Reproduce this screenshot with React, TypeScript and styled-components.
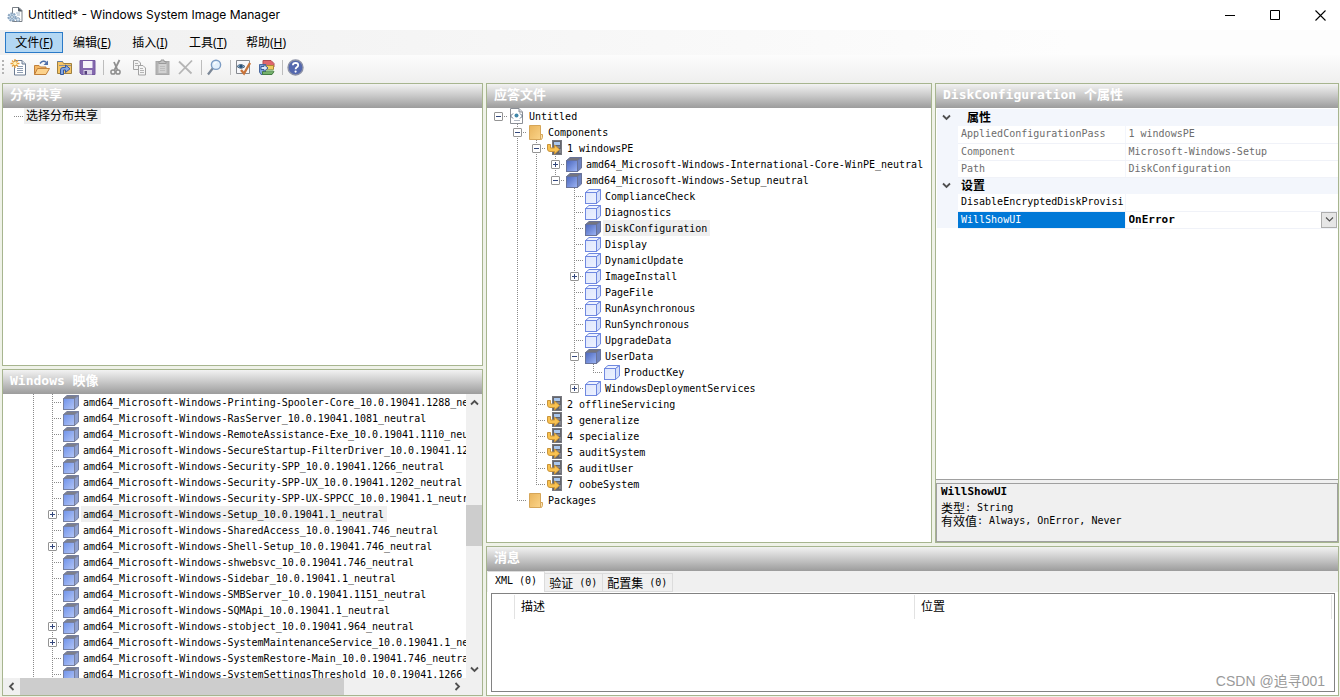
import React from "react";
import styled, { createGlobalStyle, css } from "styled-components";

const MONO = `"DejaVu Sans Mono", "Liberation Mono", "Noto Sans CJK SC", monospace`;
const CJK = `"Noto Sans CJK SC", sans-serif`;
const UI = `"Noto Sans", "Noto Sans CJK SC", sans-serif`;
const DOTS = "#8a8a8a";

const GlobalStyle = createGlobalStyle`
  *, *::before, *::after { box-sizing: border-box; }
  body { margin: 0; background: #eff2e8; color: #000; }
  button, select { font: inherit; color: inherit; margin: 0; padding: 0; border: 0; background: none; }
  svg { display: block; flex: none; }
`;

const Window = styled.div`
  display: flex;
  flex-direction: column;
  height: 100vh;
  min-height: 600px;
  overflow: hidden;
  font-family: ${MONO};
  font-size: 10px;
  line-height: 16px;
`;

/* ---------- title bar ---------- */

const TitleBar = styled.header`
  display: flex;
  align-items: center;
  flex: none;
  height: 30px;
  padding-left: 7px;
  gap: 5px;
  background: #fff;
`;

const Title = styled.h1`
  flex: 1;
  margin: 0;
  font-family: Inter, ${UI};
  font-size: 12px;
  font-weight: 400;
  white-space: nowrap;
`;

const WindowControls = styled.div`
  display: flex;
  gap: 5px;
`;

const WindowButton = styled.button`
  display: grid;
  place-items: center;
  width: 40px;
  height: 28px;
`;

/* ---------- menu and tool bars ---------- */

const MenuBar = styled.nav`
  display: flex;
  align-items: center;
  flex: none;
  height: 25px;
  padding-left: 5px;
  background: linear-gradient(90deg, #f0f0f0, #fdfdfd 80%);
  font-family: ${UI};
  font-size: 12px;
`;

const MenuButton = styled.button<{ $open?: boolean }>`
  display: flex;
  align-items: center;
  justify-content: center;
  width: 58px;
  height: 21px;
  border: 1px solid transparent;
  white-space: nowrap;
  ${(p) => p.$open && css`
    background: #b3d7f3;
    border-color: #2a7ac8;
  `}
`;

const ToolBar = styled.div`
  display: flex;
  align-items: center;
  flex: none;
  height: 28px;
  padding: 0 0 4px 2px;
  background: linear-gradient(#fcfcfc, #efefee);
`;

const Grip = styled.span`
  width: 2px;
  height: 14px;
  margin-right: 3px;
  background: repeating-linear-gradient(#b4b4b4 0 2px, transparent 2px 4px);
`;

const ToolButton = styled.button`
  display: grid;
  place-items: center;
  width: 23px;
  height: 22px;
`;

const ToolSeparator = styled.span`
  width: 1px;
  height: 15px;
  margin: 0 1px 0 4px;
  background: #bdbdbd;
`;

/* ---------- panes ---------- */

const Workspace = styled.main`
  flex: 1;
  min-height: 0;
  display: grid;
  grid-template-columns: minmax(0, 481fr) minmax(0, 853fr);
  gap: 3px;
  padding: 0 1px 1px 2px;
`;

const LeftColumn = styled.div`
  display: grid;
  grid-template-rows: minmax(0, 283fr) minmax(0, 327fr);
  gap: 3px;
  min-height: 0;
`;

const RightColumn = styled.div`
  display: grid;
  grid-template-rows: minmax(0, 460fr) minmax(0, 150fr);
  gap: 3px;
  min-height: 0;
`;

const UpperRow = styled.div`
  display: grid;
  grid-template-columns: minmax(0, 446fr) minmax(0, 404fr);
  gap: 3px;
  min-height: 0;
`;

const Pane = styled.section`
  display: flex;
  flex-direction: column;
  min-width: 0;
  min-height: 0;
  border: 1px solid #a7b58f;
  background: #fff;
  overflow: hidden;
`;

const PaneTitle = styled.h2`
  flex: none;
  height: 24px;
  margin: 0;
  padding: 0 7px;
  background: linear-gradient(#f2f2f2, #c8c8c8 50%, #9c9c9c);
  color: #fff;
  font-size: 13px;
  font-weight: 700;
  line-height: 22px;
  white-space: nowrap;
`;

const Zh = styled.span`
  font-family: ${CJK};
  font-size: 12px;
`;

/* ---------- tree ---------- */

const Tree = styled.div`
  flex: 1;
  min-width: 0;
  min-height: 0;
  padding-left: 2px;
  overflow: hidden;
`;

const TreeRow = styled.div`
  display: flex;
  align-items: center;
  height: 16px;
  white-space: nowrap;
`;

type GuideKind = "none" | "line" | "tee" | "end" | "stub";

const vertical = `repeating-linear-gradient(${DOTS} 0 1px, transparent 1px 2px)`;
const horizontal = `repeating-linear-gradient(90deg, ${DOTS} 0 1px, transparent 1px 2px)`;

const guideStyles = {
  none: css``,
  line: css`background: ${vertical} 9px 0 / 1px 16px no-repeat;`,
  tee: css`background: ${vertical} 9px 0 / 1px 16px no-repeat, ${horizontal} 9px 8px / 10px 1px no-repeat;`,
  end: css`background: ${vertical} 9px 0 / 1px 8px no-repeat, ${horizontal} 9px 8px / 10px 1px no-repeat;`,
  stub: css`background: ${horizontal} 9px 8px / 10px 1px no-repeat;`,
};

const Guide = styled.span<{ $kind: GuideKind }>`
  display: flex;
  align-items: center;
  justify-content: center;
  flex: none;
  width: 19px;
  height: 16px;
  ${(p) => guideStyles[p.$kind]}
`;

const Toggle = styled.button`
  width: 9px;
  height: 9px;
  border: 1px solid #949494;
  border-radius: 1px;
  background: #fff;
  svg { width: 7px; height: 7px; }
`;

const TreeLabel = styled.span<{ $selected?: boolean }>`
  height: 16px;
  padding: 0 3px 0 2px;
  margin-left: 2px;
  line-height: 17px;
  background: ${(p) => (p.$selected ? "#efefef" : "transparent")};
`;

const PlainLabel = styled(TreeLabel)`
  margin-left: 0;
  line-height: 14px;
`;

const IconSlot = styled.span`
  flex: none;
  width: 17px;
  height: 16px;
`;

/* ---------- scroll bars ---------- */

const ScrollArea = styled.div`
  flex: 1;
  min-height: 0;
  display: grid;
  grid-template: minmax(0, 1fr) 17px / minmax(0, 1fr) 16px;
  background: #f0f0f0;
  ${Tree} { background: #fff; }
`;

const ScrollBar = styled.div<{ $axis: "x" | "y" }>`
  display: flex;
  flex-direction: ${(p) => (p.$axis === "y" ? "column" : "row")};
  background: #f0f0f0;
  min-width: 0;
  min-height: 0;
`;

const ScrollArrow = styled.button`
  display: grid;
  place-items: center;
  flex: 0 0 17px;
`;

const ScrollTrack = styled.span<{ $share: number; $thumb?: boolean }>`
  flex: ${(p) => p.$share} 0 0;
  background: ${(p) => (p.$thumb ? "#cdcdcd" : "transparent")};
`;

/* ---------- property grid ---------- */

const PropertyArea = styled.div`
  flex: 1;
  min-height: 0;
  margin-bottom: 3px;
  padding: 1px 0 0 1px;
  border-bottom: 1px solid #a0a0a0;
`;

const PropertyPane = styled(Pane)`
  background: #f0f0f0;
  ${PropertyArea} { background: #fff; }
`;

const PropertyTable = styled.table`
  width: 100%;
  table-layout: fixed;
  border-collapse: collapse;
  td, th {
    height: 17px;
    padding: 0 0 0 3px;
    overflow: hidden;
    font-weight: 400;
    line-height: 14px;
    text-align: left;
    white-space: nowrap;
  }
`;

const GutterCell = styled.td`
  background: #f3f6fc;
  && { padding-left: 2px; }
  button { display: grid; place-items: center; width: 14px; height: 16px; }
`;

const CategoryCell = styled.th<{ $indent?: boolean }>`
  && { padding-left: ${(p) => (p.$indent ? 9 : 3)}px; font-weight: 700; }
  background: #f3f6fc;
`;

const NameCell = styled.th<{ $muted?: boolean; $active?: boolean }>`
  color: ${(p) => (p.$active ? "#fff" : p.$muted ? "#6d6d6d" : "#000")};
  background: ${(p) => (p.$active ? "#0078d7" : "#fff")};
  border-right: 1px solid #f3f6fc;
  border-bottom: 1px solid #f0f2f8;
`;

const ValueCell = styled.td<{ $muted?: boolean }>`
  color: ${(p) => (p.$muted ? "#6d6d6d" : "#000")};
  border-bottom: 1px solid #f0f2f8;
`;

const SelectBox = styled.label`
  display: flex;
  height: 16px;
  select {
    flex: 1;
    min-width: 0;
    appearance: none;
    font-size: 11px;
    font-weight: 700;
  }
`;

const DropArrow = styled.span`
  display: grid;
  place-items: center;
  flex: 0 0 16px;
  margin-right: 1px;
  border: 1px solid #adadad;
  background: #e6e6e6;
`;

const HelpBox = styled.div`
  flex: 0 0 59px;
  padding: 1px 4px;
  border: 1px solid #a0a0a0;
`;

const HelpTitle = styled.h3`
  margin: 0 0 2px;
  font-size: 11px;
  font-weight: 700;
  line-height: 14px;
`;

const HelpLine = styled.p`
  display: flex;
  align-items: center;
  height: 13px;
  margin: 0;
  line-height: 13px;
  white-space: pre;
`;

/* ---------- messages ---------- */

const TabStrip = styled.div`
  display: flex;
  align-items: flex-end;
  flex: none;
  height: 21px;
  padding-left: 1px;
  background: #f0f0f0;
`;

const Tab = styled.button<{ $active?: boolean }>`
  display: flex;
  align-items: center;
  height: ${(p) => (p.$active ? 21 : 19)}px;
  padding: ${(p) => (p.$active ? "0 7px 3px 7px" : "0 5px 0 4px")};
  border: solid #dcdcdc;
  border-width: ${(p) => (p.$active ? "1px 1px 0 0" : "1px 1px 1px 0")};
  background: ${(p) => (p.$active ? "#fff" : "#f0f0f0")};
  line-height: 17px;
  white-space: pre;
`;

const TabPage = styled.div`
  flex: 1;
  min-height: 0;
  display: flex;
  padding: 1px 3px 3px 4px;
`;

const ListFrame = styled.div`
  flex: 1;
  min-width: 0;
  padding: 1px 2px 0 0;
  border: 1px solid #828282;
`;

const MessageTable = styled.table`
  width: 100%;
  table-layout: fixed;
  border-collapse: separate;
  border-spacing: 0;
  th {
    height: 24px;
    padding: 0 0 0 6px;
    border-right: 1px solid #e2e2e2;
    font-weight: 400;
    text-align: left;
  }
`;

const Watermark = styled.div`
  position: absolute;
  right: 15px;
  bottom: 6px;
  color: #9a9a9a;
  font-family: "Liberation Sans", ${CJK};
  font-size: 14px;
  line-height: 20px;
`;

/* ---------- icons ---------- */

const Cube = ({ tone }: { tone: "blue" | "deep" | "light" }) => {
  const c = {
    blue: { a: "#6f92ea", b: "#b4c6f6", top: "#7d7f8a", side: "#8fa0cf", line: "#7780a0" },
    deep: { a: "#4a66bd", b: "#9db5f5", top: "#74757f", side: "#6f83bf", line: "#68739a" },
    light: { a: "#dfe7fc", b: "#edf2ff", top: "#eef3ff", side: "#d3defa", line: "#6f88e0" },
  }[tone];
  const id = `cube-${tone}`;
  return (
    <svg width="17" height="16" viewBox="0 0 17 16" aria-hidden="true">
      <defs>
        <linearGradient id={id} x1="0" y1="0" x2="1" y2="1">
          <stop offset="0" stopColor={c.a} />
          <stop offset="1" stopColor={c.b} />
        </linearGradient>
      </defs>
      <path d="M1.5 4.5L5 1.5H16.5L12.5 4.5Z" fill={c.top} stroke={c.line} />
      <path d="M12.5 4.5L16.5 1.5V12L12.5 15.5Z" fill={c.side} stroke={c.line} />
      <rect x="1.5" y="4.5" width="11" height="11" fill={`url(#${id})`} stroke={c.line} />
    </svg>
  );
};

const AnswerFileIcon = () => (
  <svg width="17" height="16" viewBox="0 0 17 16" aria-hidden="true">
    <path d="M2.5 .5H11L14.5 4V15.5H2.5Z" fill="#fff" stroke="#8b8f96" />
    <path d="M11 .5V4H14.5" fill="#d7dbe0" stroke="#8b8f96" />
    <path d="M5 5.5L2.5 8L5 10.5M12 5.5L14.5 8L12 10.5" fill="none" stroke="#5b6c80" />
    <circle cx="8.5" cy="7.5" r="2" fill="#3f86a8" />
    <path d="M6 12.5H12" stroke="#b2b8c2" />
  </svg>
);

const FolderIcon = () => (
  <svg width="17" height="16" viewBox="0 0 17 16" aria-hidden="true">
    <defs>
      <linearGradient id="folder" x1="0" y1="0" x2="1" y2="1">
        <stop offset="0" stopColor="#e9b45c" />
        <stop offset="1" stopColor="#fbd489" />
      </linearGradient>
    </defs>
    <path d="M2.5 1.5H13.5V15.5H2.5Z" fill="url(#folder)" stroke="#d6a659" />
    <path d="M13.5 10.5H15.5V13.5L14.5 15.5H13.5Z" fill="#fbe2b0" stroke="#d6a659" />
  </svg>
);

const PassIcon = () => (
  <svg width="17" height="16" viewBox="0 0 17 16" aria-hidden="true">
    <rect x="6.5" y=".5" width="9" height="14" fill="#64656b" stroke="#77787e" />
    <rect x="8" y="2" width="6" height="3" fill="#a9c7ee" />
    <path d="M8 7H14M14 9V13" stroke="#a1a3aa" />
    <path d="M1.5 4.5H4.5V8H8.5V5L13.5 9.5L8.5 14V11.5H4Q1.5 11.5 1.5 9Z" fill="#f9c250" stroke="#c9943a" />
  </svg>
);

const treeIcons = {
  blue: <Cube tone="blue" />,
  deep: <Cube tone="deep" />,
  light: <Cube tone="light" />,
  file: <AnswerFileIcon />,
  folder: <FolderIcon />,
  pass: <PassIcon />,
};

const AppIcon = () => (
  <svg width="16" height="16" viewBox="0 0 16 16" aria-hidden="true">
    <path d="M5.5 .5H12L15 3.5V14.5H5.5Z" fill="#fff" stroke="#7a8087" />
    <path d="M11.5 .5V4H15" fill="#56606a" stroke="#56606a" />
    <path d="M9 6H13M10 8H13" stroke="#9fb4c8" />
    <circle cx="5" cy="10" r="3.6" fill="#c4d8ea" stroke="#8aa5c0" strokeWidth="2" strokeDasharray="2 1" />
    <circle cx="5" cy="10" r="1.4" fill="#fff" stroke="#7f9cb8" />
    <circle cx="11" cy="12.5" r="1.8" fill="#d5e2ee" stroke="#8aa5c0" />
  </svg>
);

const icon = (children: React.ReactNode) => (
  <svg width="17" height="17" viewBox="0 0 17 17" fill="none" aria-hidden="true">
    {children}
  </svg>
);

const NewIcon = () => icon(
  <>
    <path d="M4.5 1.5H12L15.5 5V16H4.5Z" fill="#fff" stroke="#6c7c92" />
    <path d="M12 1.5V5H15.5" fill="#d8e0ea" stroke="#6c7c92" />
    <path d="M7 7.5H13M7 9.5H13M7 11.5H13M7 13.5H13" stroke="#8e9db2" />
    <path d="M5 0V9M.5 4.5H9.5M2 1.5L8 7.5M8 1.5L2 7.5" stroke="#e8a13c" strokeWidth="1.3" />
    <circle cx="5" cy="4.5" r="1.8" fill="#fff2b8" />
  </>
);

const OpenIcon = () => icon(
  <>
    <path d="M1.5 15.5V6.5H6L7.5 8H13V10" fill="#f3b765" stroke="#c1803a" />
    <path d="M1.5 15.5L4.5 9.5H16.5L13 15.5Z" fill="#fcd28c" stroke="#c1803a" />
    <path d="M7 4.5Q10 .5 13.5 3.5" stroke="#4d6ea8" strokeWidth="1.4" />
    <path d="M15 1.5V6H10.5Z" fill="#4d6ea8" />
  </>
);

const OpenShareIcon = () => icon(
  <>
    <path d="M1.5 14.5V2.5H6.5L7.5 4.5H15.5V14.5Z" fill="#f5c465" stroke="#a08040" />
    <path d="M3 6.5H15" stroke="#8b8f96" />
    <path d="M4.5 15.5V11Q4.5 8.5 7 8.5H9.5V6L14 9.8L9.5 13.5V11H7.5V15.5Z" fill="#86a9e6" stroke="#35599c" />
    <path d="M1.5 2.5H6.5" stroke="#5d7bb0" />
  </>
);

const SaveIcon = () => icon(
  <>
    <path d="M1 1.5H16V15.5H2.5L1 14Z" fill="#8468ae" stroke="#7558a0" />
    <rect x="4" y="2" width="9.5" height="7" fill="#f6f4fa" />
    <rect x="4.5" y="11" width="8.5" height="4.5" fill="#d9d2e6" />
    <rect x="5.5" y="12" width="2.5" height="3.5" fill="#55407c" />
  </>
);

const CutIcon = () => icon(
  <>
    <path d="M11.5 1L6.5 11M6 3L9.5 11" stroke="#8f8f8f" strokeWidth="1.8" />
    <circle cx="5" cy="13" r="2.1" stroke="#8f8f8f" strokeWidth="1.5" />
    <circle cx="10" cy="13" r="2.1" stroke="#8f8f8f" strokeWidth="1.5" />
  </>
);

const CopyIcon = () => icon(
  <>
    <path d="M2.5 1.5H7L9.5 4V10.5H2.5Z" fill="#f3f3f3" stroke="#a3a3a3" />
    <path d="M4 4.5H7M4 6.5H8" stroke="#b5b5b5" />
    <path d="M7.5 6.5H12L14.5 9V16H7.5Z" fill="#f5f5f5" stroke="#a3a3a3" />
    <path d="M9 9.5H12M9 11.5H13M9 13.5H13" stroke="#b5b5b5" />
  </>
);

const PasteIcon = () => icon(
  <>
    <rect x="2" y="2.5" width="13" height="13" fill="#b4b4b4" stroke="#a8a8a8" />
    <rect x="4.5" y="5" width="8" height="9" fill="#d2d2d2" />
    <path d="M5 4.5V2.5H7V1H10V2.5H12V4.5Z" fill="#c2c2c2" stroke="#9a9a9a" />
    <path d="M6 7.5H11M6 9.5H11M6 11.5H11" stroke="#bdbdbd" />
  </>
);

const DeleteIcon = () => icon(
  <path d="M2 2.5L14.5 14.5M15 1.5L2 15" stroke="#b5b5b5" strokeWidth="1.8" />
);

const FindIcon = () => icon(
  <>
    <path d="M7 9L2 15.5" stroke="#7b8797" strokeWidth="2.2" />
    <circle cx="10" cy="5.8" r="4.6" fill="#e3f0fc" stroke="#7c9cc4" strokeWidth="1.4" />
    <path d="M7.8 5.5Q8.5 3.3 10.5 3.4" stroke="#fff" strokeWidth="1.2" />
  </>
);

const ValidateIcon = () => icon(
  <>
    <path d="M1.5 1.5H14.5V14.5H1.5Z" fill="#f7f7fa" stroke="#85898f" />
    <path d="M2 7.5Q5.5 3.5 10 7.5Q6 11 2 7.5Z" fill="#8db6d6" stroke="#50677e" />
    <circle cx="6" cy="7.3" r="1.6" fill="#274d76" />
    <path d="M6 11L9 14.5L15 4" stroke="#c8743a" strokeWidth="2.4" />
  </>
);

const ConfigSetIcon = () => icon(
  <>
    <path d="M5 1.5H13L16 4.5V8H5Z" fill="#e0666c" stroke="#b04c55" />
    <path d="M1.5 5.5H8V15.5H3L1.5 13Z" fill="#7fa4dd" stroke="#4b699f" />
    <path d="M8 6.5H15.5V10.5H8Z" fill="#f1cd60" stroke="#ab8a34" />
    <path d="M4.5 12.5H16L14 15.5H4.5Z" fill="#74b16b" stroke="#447b42" />
    <path d="M8 10.5H15.5V12.5H8Z" fill="#9cc893" />
    <path d="M3 7.5H6V5.5L10 9L6 12.5V10.5H3Z" fill="#dce8fa" stroke="#3d5c96" />
  </>
);

const HelpIcon = () => icon(
  <>
    <circle cx="8.5" cy="8.5" r="7.5" fill="#5468ae" stroke="#8d92a6" strokeWidth="1.4" />
    <path d="M5.9 6.3Q6 3.9 8.6 3.9Q11.2 4 11.2 6.2Q11.2 7.6 9.6 8.4Q8.6 9 8.6 10.3" stroke="#fff" strokeWidth="1.8" />
    <circle cx="8.6" cy="12.6" r="1.1" fill="#fff" />
  </>
);

const Chevron = ({ dir, thin }: { dir: "up" | "down" | "left" | "right"; thin?: boolean }) => {
  const d = {
    up: "M1 6.5L4.5 3L8 6.5",
    down: "M1 2.5L4.5 6L8 2.5",
    left: "M6.5 1L3 4.5L6.5 8",
    right: "M2.5 1L6 4.5L2.5 8",
  }[dir];
  return (
    <svg width="9" height="9" viewBox="0 0 9 9" aria-hidden="true">
      <path d={d} fill="none" stroke="#505050" strokeWidth={thin ? 1.1 : 1.8} />
    </svg>
  );
};

/* ---------- data ---------- */

type TreeNode = {
  label: string;
  icon: keyof typeof treeIcons;
  expandable?: boolean;
  selected?: boolean;
  children?: TreeNode[];
};

const leaf = (label: string, more: Partial<TreeNode> = {}): TreeNode => ({ label, icon: "light", ...more });

const answerFile: TreeNode[] = [
  {
    label: "Untitled",
    icon: "file",
    children: [
      {
        label: "Components",
        icon: "folder",
        children: [
          {
            label: "1 windowsPE",
            icon: "pass",
            children: [
              leaf("amd64_Microsoft-Windows-International-Core-WinPE_neutral", { icon: "deep", expandable: true }),
              {
                label: "amd64_Microsoft-Windows-Setup_neutral",
                icon: "deep",
                children: [
                  leaf("ComplianceCheck"),
                  leaf("Diagnostics"),
                  leaf("DiskConfiguration", { icon: "deep", selected: true }),
                  leaf("Display"),
                  leaf("DynamicUpdate"),
                  leaf("ImageInstall", { expandable: true }),
                  leaf("PageFile"),
                  leaf("RunAsynchronous"),
                  leaf("RunSynchronous"),
                  leaf("UpgradeData"),
                  leaf("UserData", { icon: "deep", children: [leaf("ProductKey")] }),
                  leaf("WindowsDeploymentServices", { expandable: true }),
                ],
              },
            ],
          },
          leaf("2 offlineServicing", { icon: "pass" }),
          leaf("3 generalize", { icon: "pass" }),
          leaf("4 specialize", { icon: "pass" }),
          leaf("5 auditSystem", { icon: "pass" }),
          leaf("6 auditUser", { icon: "pass" }),
          leaf("7 oobeSystem", { icon: "pass" }),
        ],
      },
      { label: "Packages", icon: "folder" },
    ],
  },
];

const imageComponents: [string, ("expandable" | "selected")[]?][] = [
  ["Printing-Spooler-Core_10.0.19041.1288_neutral"],
  ["RasServer_10.0.19041.1081_neutral"],
  ["RemoteAssistance-Exe_10.0.19041.1110_neutral"],
  ["SecureStartup-FilterDriver_10.0.19041.1202_neutral"],
  ["Security-SPP_10.0.19041.1266_neutral"],
  ["Security-SPP-UX_10.0.19041.1202_neutral"],
  ["Security-SPP-UX-SPPCC_10.0.19041.1_neutral"],
  ["Setup_10.0.19041.1_neutral", ["expandable", "selected"]],
  ["SharedAccess_10.0.19041.746_neutral"],
  ["Shell-Setup_10.0.19041.746_neutral", ["expandable"]],
  ["shwebsvc_10.0.19041.746_neutral"],
  ["Sidebar_10.0.19041.1_neutral"],
  ["SMBServer_10.0.19041.1151_neutral"],
  ["SQMApi_10.0.19041.1_neutral"],
  ["stobject_10.0.19041.964_neutral", ["expandable"]],
  ["SystemMaintenanceService_10.0.19041.1_neutral", ["expandable"]],
  ["SystemRestore-Main_10.0.19041.746_neutral"],
  ["SystemSettingsThreshold_10.0.19041.1266"],
];

const menus: [string, string][] = [
  ["文件", "F"],
  ["编辑", "E"],
  ["插入", "I"],
  ["工具", "T"],
  ["帮助", "H"],
];

const tools: [string, React.FC][][] = [
  [["新建", NewIcon], ["打开", OpenIcon], ["打开共享", OpenShareIcon], ["保存", SaveIcon]],
  [["剪切", CutIcon], ["复制", CopyIcon], ["粘贴", PasteIcon], ["删除", DeleteIcon]],
  [["查找", FindIcon]],
  [["验证", ValidateIcon], ["配置集", ConfigSetIcon]],
  [["帮助", HelpIcon]],
];

/* ---------- pieces ---------- */

const Row = ({ node, guides }: { node: TreeNode; guides: GuideKind[] }) => {
  const open = !!node.children;
  return (
    <TreeRow role="treeitem" aria-level={guides.length} aria-selected={!!node.selected}>
      {guides.map((kind, i) => (
        <Guide key={i} $kind={kind}>
          {i === guides.length - 1 && (open || node.expandable) && (
            <Toggle aria-label={open ? "折叠" : "展开"}>
              <svg viewBox="0 0 7 7" aria-hidden="true">
                <path d={open ? "M1 3.5H6" : "M1 3.5H6M3.5 1V6"} stroke="#34487c" />
              </svg>
            </Toggle>
          )}
        </Guide>
      ))}
      <IconSlot>{treeIcons[node.icon]}</IconSlot>
      <TreeLabel $selected={node.selected}>{node.label}</TreeLabel>
    </TreeRow>
  );
};

const Branch = ({ nodes, outer = [] }: { nodes: TreeNode[]; outer?: GuideKind[] }) => (
  <>
    {nodes.map((node, i) => {
      const last = i === nodes.length - 1;
      const own: GuideKind = outer.length === 0 ? "stub" : last ? "end" : "tee";
      return (
        <React.Fragment key={node.label}>
          <Row node={node} guides={[...outer, own]} />
          {node.children && <Branch nodes={node.children} outer={[...outer, last ? "none" : "line"]} />}
        </React.Fragment>
      );
    })}
  </>
);

const Category = ({ title, indent }: { title: string; indent?: boolean }) => (
  <tr>
    <GutterCell><button aria-label="折叠"><Chevron dir="down" /></button></GutterCell>
    <CategoryCell colSpan={2} scope="colgroup" $indent={indent}><Zh>{title}</Zh></CategoryCell>
  </tr>
);

const ReadOnlyRow = ({ name, value }: { name: string; value: string }) => (
  <tr>
    <GutterCell />
    <NameCell scope="row" $muted>{name}</NameCell>
    <ValueCell $muted>{value}</ValueCell>
  </tr>
);

export default function App() {
  return (
    <Window>
      <GlobalStyle />
      <TitleBar>
        <AppIcon />
        <Title>Untitled* - Windows System Image Manager</Title>
        <WindowControls>
          <WindowButton aria-label="最小化">
            <svg width="10" height="11" viewBox="0 0 10 11"><path d="M0 5.5H10" stroke="#000" /></svg>
          </WindowButton>
          <WindowButton aria-label="最大化">
            <svg width="10" height="10" viewBox="0 0 10 10"><path d="M.5 .5H9.5V9.5H.5Z" fill="none" stroke="#000" /></svg>
          </WindowButton>
          <WindowButton aria-label="关闭">
            <svg width="11" height="11" viewBox="0 0 11 11"><path d="M.5 .5L10.5 10.5M10.5 .5L.5 10.5" stroke="#000" strokeWidth="1.1" /></svg>
          </WindowButton>
        </WindowControls>
      </TitleBar>

      <MenuBar>
        {menus.map(([name, key], i) => (
          <MenuButton key={key} $open={i === 0}>{name}(<u>{key}</u>)</MenuButton>
        ))}
      </MenuBar>

      <ToolBar role="toolbar">
        <Grip />
        {tools.map((group, g) => (
          <React.Fragment key={g}>
            {g > 0 && <ToolSeparator />}
            {group.map(([name, Icon]) => (
              <ToolButton key={name} aria-label={name}><Icon /></ToolButton>
            ))}
          </React.Fragment>
        ))}
      </ToolBar>

      <Workspace>
        <LeftColumn>
          <Pane>
            <PaneTitle>分布共享</PaneTitle>
            <Tree role="tree">
              <TreeRow role="treeitem">
                <Guide $kind="stub" />
                <PlainLabel $selected><Zh>选择分布共享</Zh></PlainLabel>
              </TreeRow>
            </Tree>
          </Pane>

          <Pane>
            <PaneTitle>Windows 映像</PaneTitle>
            <ScrollArea>
              <Tree role="tree">
                {imageComponents.map(([name, flags = []]) => (
                  <Row
                    key={name}
                    guides={["none", "line", "tee"]}
                    node={{
                      label: `amd64_Microsoft-Windows-${name}`,
                      icon: "blue",
                      expandable: flags.includes("expandable"),
                      selected: flags.includes("selected"),
                    }}
                  />
                ))}
              </Tree>
              <ScrollBar $axis="y">
                <ScrollArrow aria-label="向上滚动"><Chevron dir="up" /></ScrollArrow>
                <ScrollTrack $share={94} />
                <ScrollTrack $share={41} $thumb />
                <ScrollTrack $share={115} />
                <ScrollArrow aria-label="向下滚动"><Chevron dir="down" /></ScrollArrow>
              </ScrollBar>
              <ScrollBar $axis="x">
                <ScrollArrow aria-label="向左滚动"><Chevron dir="left" /></ScrollArrow>
                <ScrollTrack $share={324} $thumb />
                <ScrollTrack $share={105} />
                <ScrollArrow aria-label="向右滚动"><Chevron dir="right" /></ScrollArrow>
              </ScrollBar>
            </ScrollArea>
          </Pane>
        </LeftColumn>

        <RightColumn>
          <UpperRow>
            <Pane>
              <PaneTitle>应答文件</PaneTitle>
              <Tree role="tree"><Branch nodes={answerFile} /></Tree>
            </Pane>

            <PropertyPane>
              <PaneTitle>DiskConfiguration 个属性</PaneTitle>
              <PropertyArea>
                <PropertyTable>
                  <colgroup>
                    <col width="21" />
                    <col width="167" />
                    <col />
                  </colgroup>
                  <tbody>
                    <Category title="属性" indent />
                    <ReadOnlyRow name="AppliedConfigurationPass" value="1 windowsPE" />
                    <ReadOnlyRow name="Component" value="Microsoft-Windows-Setup" />
                    <ReadOnlyRow name="Path" value="DiskConfiguration" />
                    <Category title="设置" />
                    <tr>
                      <GutterCell />
                      <NameCell scope="row">DisableEncryptedDiskProvisi</NameCell>
                      <ValueCell />
                    </tr>
                    <tr>
                      <GutterCell />
                      <NameCell scope="row" $active>WillShowUI</NameCell>
                      <ValueCell>
                        <SelectBox>
                          <select aria-label="WillShowUI" defaultValue="OnError">
                            <option>Always</option>
                            <option>OnError</option>
                            <option>Never</option>
                          </select>
                          <DropArrow><Chevron dir="down" thin /></DropArrow>
                        </SelectBox>
                      </ValueCell>
                    </tr>
                  </tbody>
                </PropertyTable>
              </PropertyArea>
              <HelpBox>
                <HelpTitle>WillShowUI</HelpTitle>
                <HelpLine><Zh>类型</Zh>: String</HelpLine>
                <HelpLine><Zh>有效值</Zh>: Always, OnError, Never</HelpLine>
              </HelpBox>
            </PropertyPane>
          </UpperRow>

          <Pane>
            <PaneTitle>消息</PaneTitle>
            <TabStrip role="tablist">
              <Tab role="tab" aria-selected $active>XML (0)</Tab>
              <Tab role="tab"><Zh>验证</Zh> (0)</Tab>
              <Tab role="tab"><Zh>配置集</Zh> (0)</Tab>
            </TabStrip>
            <TabPage role="tabpanel">
              <ListFrame>
                <MessageTable>
                  <colgroup>
                    <col width="23" />
                    <col width="400" />
                    <col />
                  </colgroup>
                  <thead>
                    <tr>
                      <th aria-label="图标" />
                      <th scope="col"><Zh>描述</Zh></th>
                      <th scope="col"><Zh>位置</Zh></th>
                    </tr>
                  </thead>
                </MessageTable>
              </ListFrame>
            </TabPage>
          </Pane>
        </RightColumn>
      </Workspace>
      <Watermark>CSDN @追寻001</Watermark>
    </Window>
  );
}
